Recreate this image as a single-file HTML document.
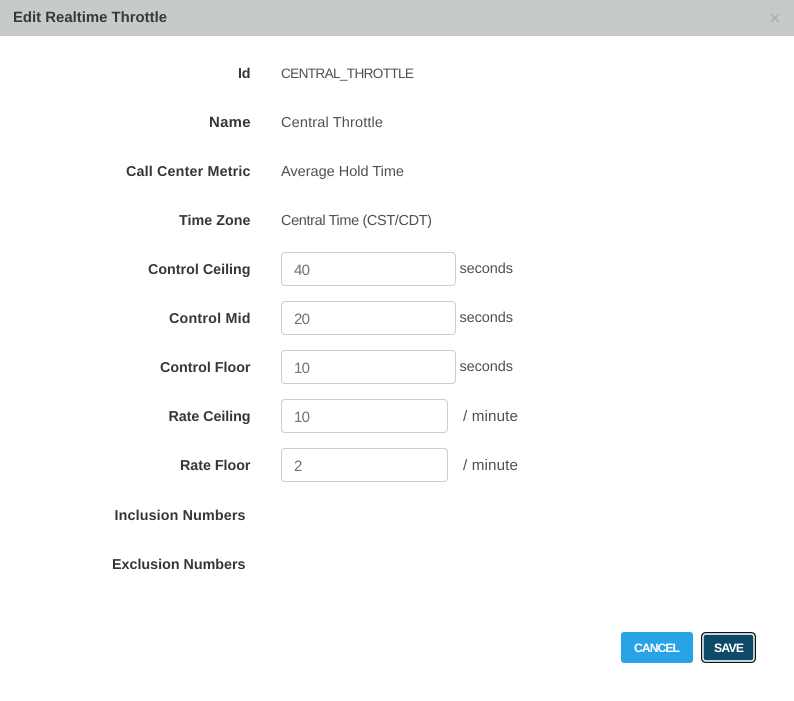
<!DOCTYPE html>
<html><head><meta charset="utf-8"><title>Edit Realtime Throttle</title>
<style>
html,body{margin:0;padding:0;background:#fff;width:794px;height:701px;overflow:hidden}
svg{position:absolute;left:0;top:0;display:block}
text{font-family:"Liberation Sans",Arial,sans-serif;font-size:14.5px;fill:#505050;text-rendering:geometricPrecision}
.b{font-weight:700;fill:#363636;font-size:14.3px}
.v{fill:#727272;font-size:15px}
</style></head><body>
<svg width="794" height="701" viewBox="0 0 794 701" xmlns="http://www.w3.org/2000/svg">
<rect x="0" y="0" width="794" height="36" fill="#c5cbcb"/>
<text class="b" x="13" y="22" textLength="154" style="fill:#36393a;font-size:14.9px">Edit Realtime Throttle</text>
<path d="M771 14L779 22M779 14L771 22" stroke="#adb2b2" stroke-width="1.6" fill="none"/>

<text class="b" x="238" y="78" textLength="12.5">Id</text>
<text class="b" x="209" y="127" textLength="41.5" style="font-size:14.9px">Name</text>
<text class="b" x="126" y="176" textLength="124.5">Call Center Metric</text>
<text class="b" x="179" y="225" textLength="71.5">Time Zone</text>
<text class="b" x="148" y="274" textLength="102.5">Control Ceiling</text>
<text class="b" x="169" y="323" textLength="81.5">Control Mid</text>
<text class="b" x="160" y="372" textLength="90.5">Control Floor</text>
<text class="b" x="168.5" y="421" textLength="82">Rate Ceiling</text>
<text class="b" x="180" y="470" textLength="70.5">Rate Floor</text>
<text class="b" x="114.5" y="520" textLength="131">Inclusion Numbers</text>
<text class="b" x="112" y="569" textLength="133.5">Exclusion Numbers</text>

<text x="281" y="78" textLength="133" style="font-size:13.6px">CENTRAL_THROTTLE</text>
<text x="281" y="127" textLength="102">Central Throttle</text>
<text x="281" y="176" textLength="123">Average Hold Time</text>
<text x="281" y="225" textLength="151">Central Time (CST/CDT)</text>

<g fill="#fff" stroke="#cbcece">
<rect x="281.5" y="252.5" width="174" height="33" rx="3.5"/>
<rect x="281.5" y="301.5" width="174" height="33" rx="3.5"/>
<rect x="281.5" y="350.5" width="174" height="33" rx="3.5"/>
<rect x="281.5" y="399.5" width="166" height="33" rx="3.5"/>
<rect x="281.5" y="448.5" width="166" height="33" rx="3.5"/>
</g>
<text class="v" x="294" y="275" textLength="16">40</text>
<text class="v" x="294" y="324" textLength="16">20</text>
<text class="v" x="294" y="373" textLength="16">10</text>
<text class="v" x="294" y="422" textLength="16">10</text>
<text class="v" x="294" y="471" textLength="8">2</text>

<text x="459.5" y="273" textLength="53.5">seconds</text>
<text x="459.5" y="322" textLength="53.5">seconds</text>
<text x="459.5" y="371" textLength="53.5">seconds</text>
<text x="463" y="421" textLength="55" style="font-size:15.2px">/ minute</text>
<text x="463" y="470" textLength="55" style="font-size:15.2px">/ minute</text>

<rect x="621" y="632" width="72" height="31" rx="3" fill="#29a3e6"/>
<text x="634" y="652" textLength="46" style="font-weight:700;font-size:12.2px;fill:#fff">CANCEL</text>
<rect x="701.5" y="632.5" width="54" height="30" rx="4" fill="#0e4a68" stroke="#111" stroke-width="1"/>
<rect x="703" y="634" width="51" height="27" rx="3" fill="none" stroke="#fff" stroke-width="1.4"/>
<text x="714" y="652" textLength="30" style="font-weight:700;font-size:12.2px;fill:#fff">SAVE</text>
</svg>
</body></html>
